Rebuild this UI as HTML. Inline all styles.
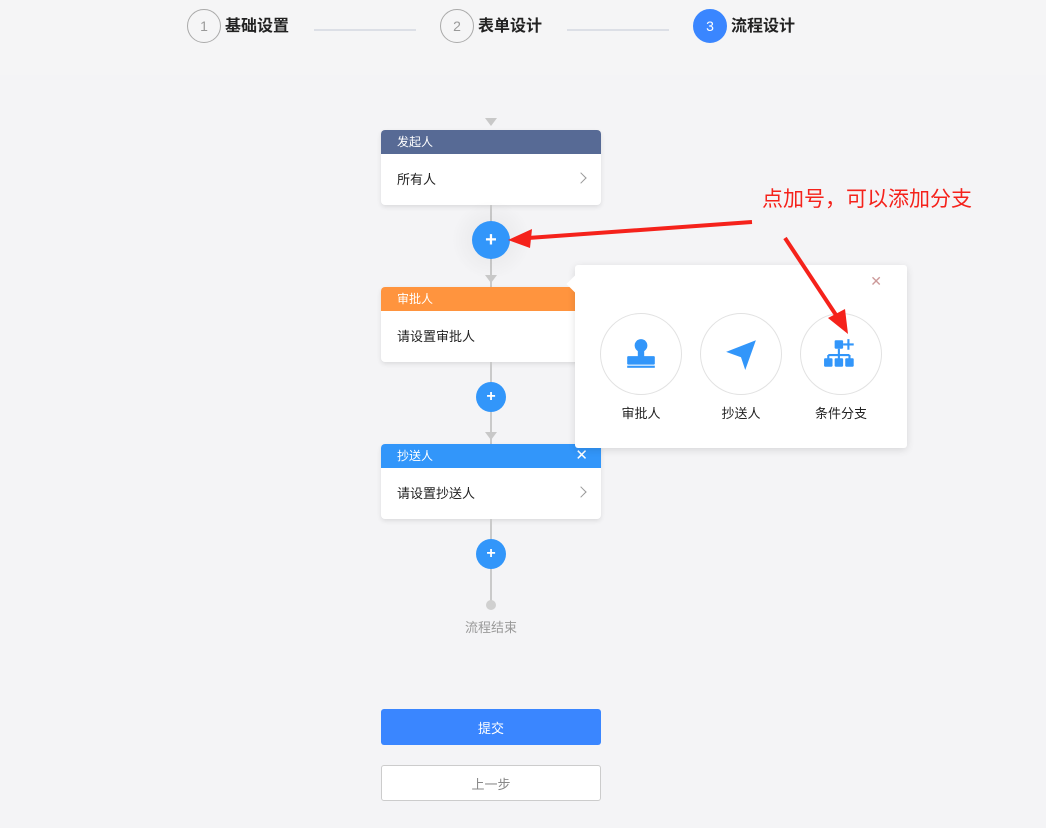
<!DOCTYPE html>
<html><head><meta charset="utf-8"><style>
*{margin:0;padding:0;box-sizing:border-box}
body{width:1046px;height:828px;background:#f4f4f6;font-family:"Liberation Sans","Noto Sans CJK SC",sans-serif;position:relative;overflow:hidden}
.top{position:absolute;left:0;top:0;width:1046px;height:75px;background:#f5f5f6}
.step{position:absolute;top:9px;display:flex;align-items:center;font-size:16px;color:#222;font-weight:bold}
.step span.t{position:relative;top:-2px}
.num{width:34px;height:34px;border-radius:50%;border:1px solid #aaa;color:#999;font-size:14px;font-weight:normal;display:flex;align-items:center;justify-content:center;margin-right:4px}
.num.act{background:#3a86ff;border-color:#3a86ff;color:#fff}
.sl{position:absolute;top:29px;height:2px;width:102px;background:#dcdfe6}
.ln{position:absolute;left:490px;width:2px;background:#cacaca}
.tri{position:absolute;left:485px;width:0;height:0;border-left:6px solid transparent;border-right:6px solid transparent;border-top:8px solid #c8c8c8}
.card{position:absolute;left:381px;width:220px;background:#fff;border-radius:4px;box-shadow:0 2px 5px rgba(0,0,0,.1);overflow:hidden}
.ch{height:24px;color:#fff;font-size:12px;line-height:24px;padding-left:16px;position:relative}
.cb{height:51px;font-size:13px;line-height:51px;padding-left:16px;color:#222;position:relative}
.chev{position:absolute;right:16px;top:20px;width:8px;height:8px;border-right:1.3px solid #999;border-top:1.3px solid #999;transform:rotate(45deg)}
.plus{position:absolute;border-radius:50%;background:#3296fa;color:#fff;display:flex;align-items:center;justify-content:center;font-weight:bold}
.pop{position:absolute;left:575px;top:265px;width:332px;height:183px;background:#fff;border-radius:3px;box-shadow:0 2px 8px rgba(0,0,0,.12)}
.it{position:absolute;top:48px;width:82px;text-align:center;font-size:13px;color:#222}
.circ{width:82px;height:82px;border-radius:50%;border:1px solid #e2e2e2;display:flex;align-items:center;justify-content:center;margin-bottom:8px}
.btn{position:absolute;left:381px;width:220px;height:36px;border-radius:3px;font-size:13px;display:flex;align-items:center;justify-content:center}
</style></head><body>
<div class="top"></div>
<div class="step" style="left:187px"><div class="num">1</div><span class="t">基础设置</span></div>
<div class="sl" style="left:314px"></div>
<div class="step" style="left:440px"><div class="num">2</div><span class="t">表单设计</span></div>
<div class="sl" style="left:567px"></div>
<div class="step" style="left:693px"><div class="num act">3</div><span class="t">流程设计</span></div>

<div class="tri" style="top:118px"></div>
<div class="card" style="top:130px"><div class="ch" style="background:#576a95">发起人</div><div class="cb">所有人<span class="chev"></span></div></div>
<div class="ln" style="top:205px;height:82px"></div>
<div style="position:absolute;left:451px;top:200px;width:80px;height:80px;border-radius:50%;background:radial-gradient(rgba(0,0,0,.06),rgba(0,0,0,0) 70%)"></div>
<div class="plus" style="left:472px;top:221px;width:38px;height:38px;font-size:20px">+</div>
<div class="tri" style="top:275px"></div>
<div class="card" style="top:287px"><div class="ch" style="background:#ff943e">审批人</div><div class="cb">请设置审批人</div></div>
<div class="ln" style="top:362px;height:82px"></div>
<div class="plus" style="left:476px;top:382px;width:30px;height:30px;font-size:16px">+</div>
<div class="tri" style="top:432px"></div>
<div class="card" style="top:444px"><div class="ch" style="background:#3296fa">抄送人<span style="position:absolute;right:13px;top:0;font-size:15px">✕</span></div><div class="cb">请设置抄送人<span class="chev"></span></div></div>
<div class="ln" style="top:519px;height:86px"></div>
<div class="plus" style="left:476px;top:539px;width:30px;height:30px;font-size:16px">+</div>
<div style="position:absolute;left:486px;top:600px;width:10px;height:10px;border-radius:50%;background:#d0d0d0"></div>
<div style="position:absolute;left:441px;top:617px;width:100px;text-align:center;font-size:13px;color:#999">流程结束</div>

<div class="pop">
<div style="position:absolute;left:-6px;top:13px;width:12px;height:12px;background:#fff;transform:rotate(45deg)"></div>
<div style="position:absolute;right:25px;top:8px;font-size:14px;color:#c99">✕</div>
<div class="it" style="left:25px"><div class="circ"><svg width="34" height="34" viewBox="0 0 32 32" fill="#3296fa"><circle cx="16" cy="8" r="6"/><rect x="13" y="12" width="6" height="8"/><rect x="3" y="18" width="26" height="8" rx="1"/><rect x="3" y="27" width="26" height="2"/></svg></div>审批人</div>
<div class="it" style="left:125px"><div class="circ"><svg width="34" height="34" viewBox="0 0 32 32" fill="#3296fa"><path d="M2 14 L30 3 L20 31 L16 19 Z"/></svg></div>抄送人</div>
<div class="it" style="left:225px"><div class="circ"><svg width="36" height="34" viewBox="0 0 34 32" fill="#3296fa"><rect x="11" y="3" width="8" height="8" rx="1"/><path d="M24 2v10M19 7h10" stroke="#3296fa" stroke-width="2"/><path d="M15 11v6M5 17h20M5 17v4M15 17v4M25 17v4" stroke="#3296fa" stroke-width="2" fill="none"/><rect x="1" y="20" width="8" height="8" rx="1"/><rect x="11" y="20" width="8" height="8" rx="1"/><rect x="21" y="20" width="8" height="8" rx="1"/></svg></div>条件分支</div>
</div>

<div class="btn" style="top:709px;background:#3a86ff;color:#fff">提交</div>
<div class="btn" style="top:765px;background:#fff;border:1px solid #ccc;color:#888">上一步</div>

<div style="position:absolute;left:762px;top:183px;font-size:21px;color:#f5221b">点加号，可以添加分支</div>
<svg style="position:absolute;left:0;top:0" width="1046" height="828">
<path d="M752 222 L528 238" stroke="#f5221b" stroke-width="4"/>
<path d="M508 240 L532 229 L530 248 Z" fill="#f5221b"/>
<path d="M785 238 L838 318" stroke="#f5221b" stroke-width="4"/>
<path d="M848 334 L828 318 L845 309 Z" fill="#f5221b"/>
</svg>
</body></html>
